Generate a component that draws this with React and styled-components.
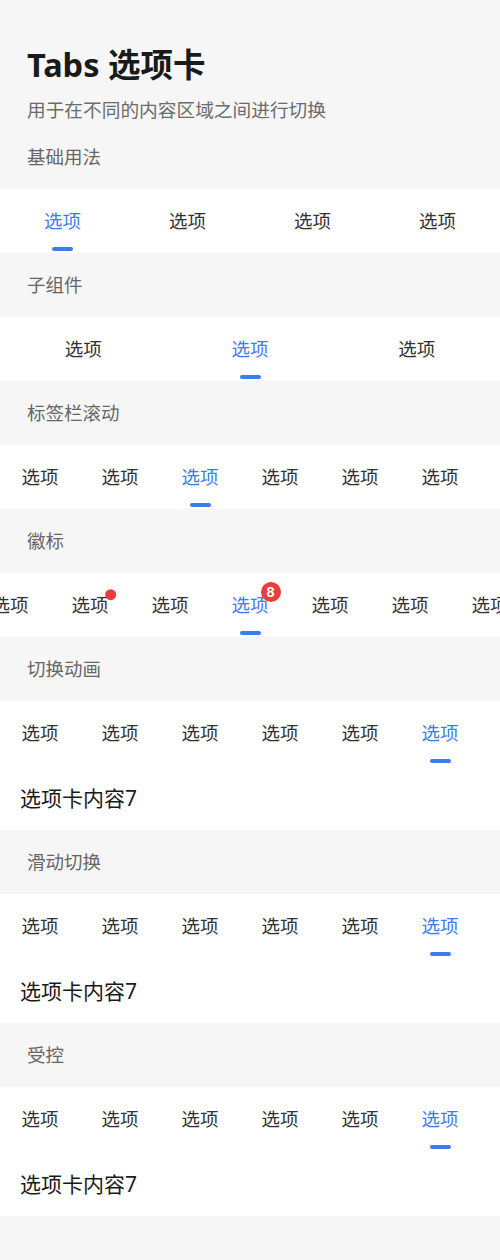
import { useEffect, useRef } from "react";
import styled, { createGlobalStyle } from "styled-components";

const BLUE = "#3b7ded";
const RED = "#ee3b3b";

const GlobalStyle = createGlobalStyle`
  html, body {
    margin: 0;
    padding: 0;
    background: #f6f6f6;
  }
  body {
    font-family: "Noto Sans", "Noto Sans CJK SC", sans-serif;
    -webkit-font-smoothing: antialiased;
  }
`;

const demos = [
  { id: "basic", title: "基础用法", count: 4, active: 0, tabWidth: null },
  { id: "child", title: "子组件", count: 3, active: 1, tabWidth: null },
  { id: "scroll", title: "标签栏滚动", count: 6, active: 2, tabWidth: 80 },
  {
    id: "badge",
    title: "徽标",
    count: 8,
    active: 3,
    tabWidth: 80,
    badges: { 1: "dot", 3: "8" },
  },
  { id: "anim", title: "切换动画", count: 6, active: 5, tabWidth: 80, content: true },
  { id: "swipe", title: "滑动切换", count: 6, active: 5, tabWidth: 80, content: true },
  { id: "ctrl", title: "受控", count: 6, active: 5, tabWidth: 80, content: true },
];

function Tabs({ count, active, tabWidth, badges = {} }) {
  const navRef = useRef(null);

  useEffect(() => {
    const nav = navRef.current;
    if (!nav || !tabWidth) return;
    const center = active * tabWidth + tabWidth / 2;
    nav.scrollLeft = Math.max(0, center - nav.clientWidth / 2);
  }, [active, tabWidth]);

  return (
    <TabNav ref={navRef}>
      {Array.from({ length: count }).map((_, i) => (
        <Tab key={i} $width={tabWidth}>
          <TabLabel $active={i === active}>
            选项
            {badges[i] === "dot" && <Dot />}
            {badges[i] && badges[i] !== "dot" && <Badge>{badges[i]}</Badge>}
          </TabLabel>
          {i === active && <Line />}
        </Tab>
      ))}
    </TabNav>
  );
}

const App = () => {
  return (
    <Page>
      <GlobalStyle />
      <Header>
        <Title>Tabs 选项卡</Title>
        <Desc>用于在不同的内容区域之间进行切换</Desc>
      </Header>
      {demos.map((demo) => (
        <section key={demo.id}>
          <SectionTitle>{demo.title}</SectionTitle>
          <Panel>
            <Tabs {...demo} />
            {demo.content && <Content>选项卡内容7</Content>}
          </Panel>
        </section>
      ))}
    </Page>
  );
};

export default App;

const Page = styled.div`
  min-height: 1260px;
  background: #f6f6f6;
  padding-bottom: 40px;
  box-sizing: border-box;
`;

const Header = styled.header`
  padding: 40px 27px 3px;
`;

const Title = styled.h1`
  margin: 0;
  font-size: 32.5px;
  line-height: 50px;
  font-weight: 700;
  color: #1a1a1a;
`;

const Desc = styled.p`
  margin: 8px 0 0;
  font-size: 18.7px;
  line-height: 24px;
  color: #6b6b6b;
`;

const SectionTitle = styled.h2`
  margin: 0;
  padding: 20px 27px;
  font-size: 18.5px;
  line-height: 24px;
  font-weight: 400;
  color: #666;
`;

const Panel = styled.div`
  background: #fff;
`;

const TabNav = styled.div`
  display: flex;
  height: 64px;
  overflow-x: auto;
  scrollbar-width: none;
  &::-webkit-scrollbar {
    display: none;
  }
`;

const Tab = styled.div`
  position: relative;
  flex: ${({ $width }) => ($width ? `0 0 ${$width}px` : "1 1 0")};
  display: flex;
  align-items: center;
  justify-content: center;
`;

const TabLabel = styled.span`
  position: relative;
  font-size: 18.5px;
  line-height: 24px;
  color: ${({ $active }) => ($active ? BLUE : "#323232")};
  white-space: nowrap;
`;

const Line = styled.span`
  position: absolute;
  bottom: 2px;
  left: 50%;
  width: 21px;
  height: 4px;
  margin-left: -10.5px;
  border-radius: 2px;
  background: ${BLUE};
`;

const Dot = styled.span`
  position: absolute;
  top: 0;
  right: 0;
  width: 11px;
  height: 11px;
  border-radius: 50%;
  background: ${RED};
  transform: translate(65%, -35%);
`;

const Badge = styled.span`
  position: absolute;
  top: 0;
  right: 0;
  min-width: 20px;
  height: 20px;
  padding: 0 5px;
  box-sizing: border-box;
  border-radius: 10px;
  background: ${RED};
  color: #fff;
  font-family: "Liberation Sans", "Noto Sans", sans-serif;
  font-size: 14.5px;
  font-weight: 700;
  line-height: 20px;
  text-align: center;
  transform: translate(60%, -55%);
`;

const Content = styled.div`
  padding: 21px 20px 20px;
  font-size: 21px;
  line-height: 24px;
  color: #1a1a1a;
`;
